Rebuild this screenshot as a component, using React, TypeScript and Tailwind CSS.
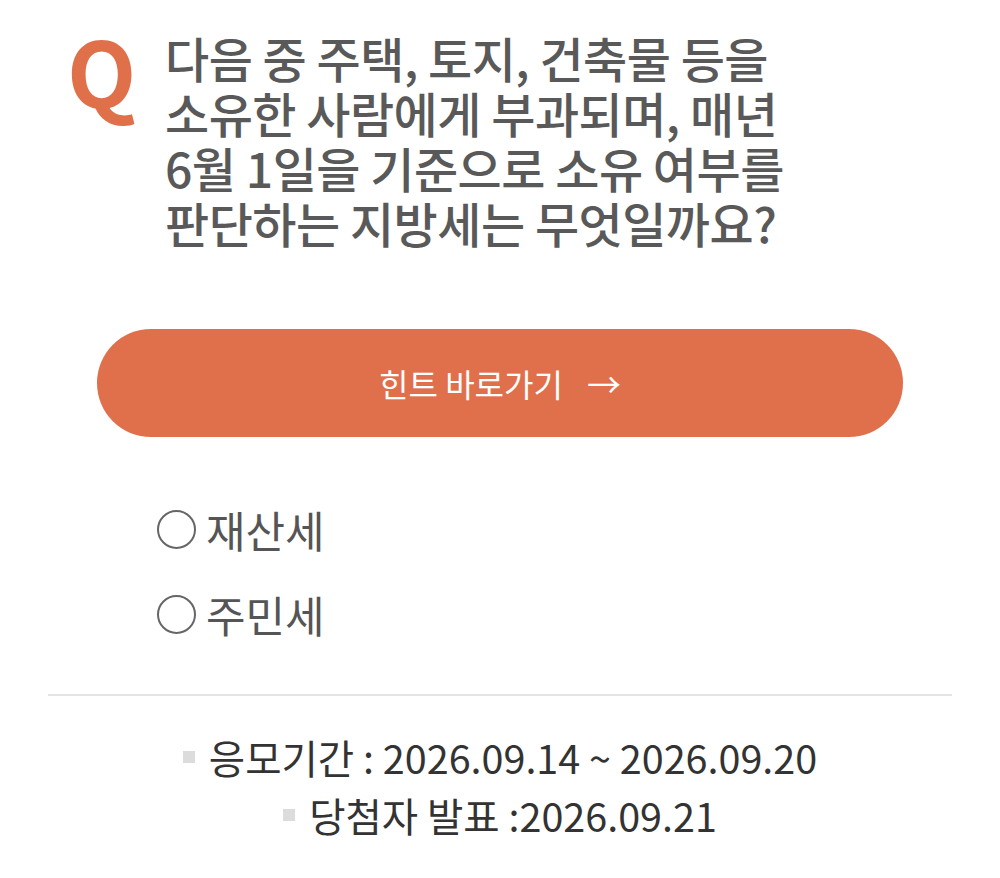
const font = "font-['Noto_Sans_CJK_KR','Noto_Sans',sans-serif]";

function Radio({ label }: { label: string }) {
  return (
    <label className="flex items-center gap-[10px] h-[60px] cursor-pointer">
      <span className="w-[39px] h-[39px] rounded-full border-[2.5px] border-[#666] shrink-0" />
      <span className="text-[43px] leading-none text-[#555]">{label}</span>
    </label>
  );
}

const lines = [
  "다음 중 주택, 토지, 건축물 등을",
  "소유한 사람에게 부과되며, 매년",
  "6월 1일을 기준으로 소유 여부를",
  "판단하는 지방세는 무엇일까요?",
];

export default function App() {
  return (
    <div className={`w-[1000px] h-[878px] bg-white overflow-hidden ${font}`}>
      {/* question */}
      <div className="flex pt-[30px] pl-[67px]">
        <div className="w-[98px] shrink-0 -mt-[11px] text-[90px] leading-[100px] font-semibold text-[#e0704a]">
          Q
        </div>
        <div className="text-[48px] leading-[55px] font-medium text-[#595959] tracking-[-0.5px]">
          {lines.map((l) => (
            <p key={l} className="h-[55px] whitespace-nowrap">{l}</p>
          ))}
        </div>
      </div>

      {/* hint button */}
      <div className="px-[97px] mt-[79px]">
        <button className="w-full h-[108px] rounded-full bg-[#e0704b] text-white text-[32px] flex items-center justify-center gap-[24px]">
          <span>힌트 바로가기</span>
          <span className="text-[34px]">→</span>
        </button>
      </div>

      {/* options */}
      <div className="pl-[157px] mt-[62px] flex flex-col gap-[25px]">
        <Radio label="재산세" />
        <Radio label="주민세" />
      </div>

      {/* divider */}
      <div className="mx-[48px] mt-[50px] h-[2px] bg-[#e4e4e4]" />

      {/* period */}
      <div className="mt-[36px] flex flex-col items-center gap-[8px] text-[39.5px] leading-[50px] text-[#333]">
        <p className="flex items-center gap-[14px]">
          <span className="w-[12px] h-[12px] bg-[#dcdcdc]" />
          <span>응모기간 : 2026.09.14 ~ 2026.09.20</span>
        </p>
        <p className="flex items-center gap-[14px]">
          <span className="w-[12px] h-[12px] bg-[#dcdcdc]" />
          <span>당첨자 발표 :2026.09.21</span>
        </p>
      </div>
    </div>
  );
}
